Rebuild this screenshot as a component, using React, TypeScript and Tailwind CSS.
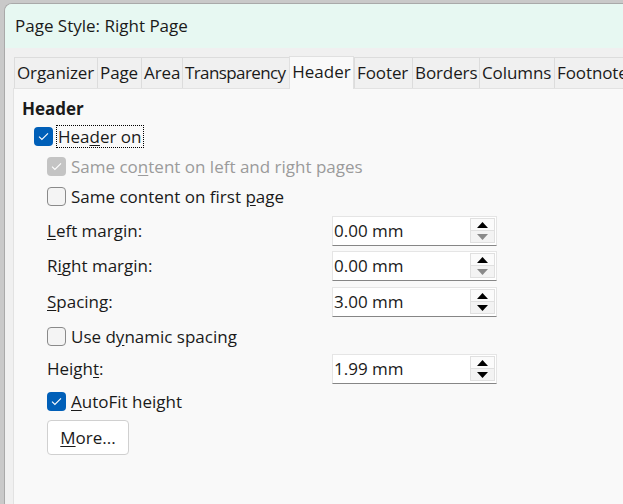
import React from 'react'

const font = { fontFamily: '"Open Sans", "Noto Sans", sans-serif' }

function Check({ state }: { state: 'on' | 'off' | 'dis' }) {
  if (state === 'off') {
    return <span className="block w-[19px] h-[19px] rounded-[4px] border border-[#8a8a8a] bg-[#f4f4f4] shrink-0" />
  }
  const bg = state === 'on' ? 'bg-[#005fb8]' : 'bg-[#c4c4c4]'
  return (
    <span className={`flex items-center justify-center w-[19px] h-[19px] rounded-[4px] shrink-0 ${bg}`}>
      <svg width="11" height="9" viewBox="0 0 11 9" fill="none">
        <path d="M1 4.6 L3.9 7.4 L10 1.3" stroke="white" strokeWidth="1.1" />
      </svg>
    </span>
  )
}

function Spin({ value, downDisabled }: { value: string; downDisabled?: boolean }) {
  return (
    <div className="flex w-[165px] h-[30px] bg-white border border-[#e5e5e5] border-b-[#868686]">
      <div className="flex-1 flex items-center pl-[1px] text-[17px] text-[#1a1a1a]">{value}</div>
      <div className="flex flex-col w-[25px] mr-[1px] mt-[1px] mb-[2px] border border-[#e0e0e0] bg-[#f3f3f3]">
        <div className="flex-1 flex items-center justify-center border-b border-[#e0e0e0] bg-[#fbfbfb]">
          <svg width="11" height="6" viewBox="0 0 11 6"><path d="M0 6 L5.5 0 L11 6 Z" fill="#000" /></svg>
        </div>
        <div className="flex-1 flex items-center justify-center">
          <svg width="11" height="6" viewBox="0 0 11 6"><path d="M0 0 L5.5 6 L11 0 Z" fill={downDisabled ? '#8a8a8a' : '#000'} /></svg>
        </div>
      </div>
    </div>
  )
}

const tabs = [
  { name: 'Organizer', w: 83 },
  { name: 'Page', w: 44 },
  { name: 'Area', w: 41 },
  { name: 'Transparency', w: 107, tight: true },
  { name: 'Header', w: 65, active: true },
  { name: 'Footer', w: 58 },
  { name: 'Borders', w: 67 },
  { name: 'Columns', w: 75 },
  { name: 'Footnotes', w: 90 },
]

export default function App() {
  return (
    <div className="w-[623px] h-[504px] overflow-hidden bg-[#c9c9c9] flex pl-[4px] pt-[3px]" style={font}>
      <div className="flex-1 flex flex-col rounded-tl-[8px] border-l border-t border-[#a9a9a9] bg-[#f0f0f0] overflow-hidden">
        <div className="h-[44px] shrink-0 bg-[#e7f8f2] flex items-center pl-[10px] text-[17px] text-[#1a1a1a]">
          Page Style: Right Page
        </div>
        <div className="flex items-end pl-[9px] mt-[7px] h-[33px] shrink-0">
          {tabs.map(t => (
            <div
              key={t.name}
              style={{ width: t.w }}
              className={
                t.active
                  ? 'h-[33px] shrink-0 flex items-center justify-center whitespace-nowrap bg-[#f9f9f9] border-x border-t border-[#e0e0e0] text-[17px] text-[#1a1a1a] relative -mb-[1px] pb-[2px]'
                  : `h-[31px] shrink-0 flex items-center justify-start pl-[2px] whitespace-nowrap bg-[#f0f0f0] border-l border-t border-[#dcdcdc] text-[17px] text-[#1a1a1a] ${t.tight ? 'tracking-[-0.6px]' : 'tracking-[-0.1px]'}`
              }
            >
              {t.name}
            </div>
          ))}
        </div>
        <div className="flex-1 ml-[8px] bg-[#f9f9f9] border-l border-t border-[#e2e2e2] pl-[8px] pt-[9px] text-[17px] text-[#1a1a1a]">
          <div className="font-bold h-[22px] flex items-center">Header</div>
          <div className="flex items-center gap-[4px] pl-[12px] mt-[6px] h-[21px]">
            <Check state="on" />
            <span className="outline outline-1 outline-dotted outline-black px-[1px] leading-[21px]">
              Hea<u className="underline-offset-2">d</u>er on
            </span>
          </div>
          <div className="pl-[25px]">
            <div className="flex items-center gap-[5px] mt-[9px] h-[21px] text-[#9b9b9b]">
              <Check state="dis" />
              <span>Same co<u className="underline-offset-2">n</u>tent on left and right pages</span>
            </div>
            <div className="flex items-center gap-[5px] mt-[9px] h-[21px]">
              <Check state="off" />
              <span>Same content on first <u className="underline-offset-2">p</u>age</span>
            </div>
            <div className="flex items-center justify-between w-[450px] mt-[9px]">
              <span><u className="underline-offset-2">L</u>eft margin:</span>
              <Spin value="0.00 mm" downDisabled />
            </div>
            <div className="flex items-center justify-between w-[450px] mt-[5px]">
              <span>R<u className="underline-offset-2">i</u>ght margin:</span>
              <Spin value="0.00 mm" downDisabled />
            </div>
            <div className="flex items-center justify-between w-[450px] mt-[6px]">
              <span><u className="underline-offset-2">S</u>pacing:</span>
              <Spin value="3.00 mm" />
            </div>
            <div className="flex items-center gap-[5px] mt-[9px] h-[21px]">
              <Check state="off" />
              <span>Use d<u className="underline-offset-2">y</u>namic spacing</span>
            </div>
            <div className="flex items-center justify-between w-[450px] mt-[7px]">
              <span>Heigh<u className="underline-offset-2">t</u>:</span>
              <Spin value="1.99 mm" />
            </div>
            <div className="flex items-center gap-[5px] mt-[7px] h-[21px]">
              <Check state="on" />
              <span><u className="underline-offset-2">A</u>utoFit height</span>
            </div>
            <button className="mt-[8px] w-[82px] h-[35px] rounded-[4px] border border-[#d0d0d0] bg-white text-[17px] text-[#1a1a1a]">
              <u className="underline-offset-2">M</u>ore...
            </button>
          </div>
        </div>
      </div>
    </div>
  )
}
